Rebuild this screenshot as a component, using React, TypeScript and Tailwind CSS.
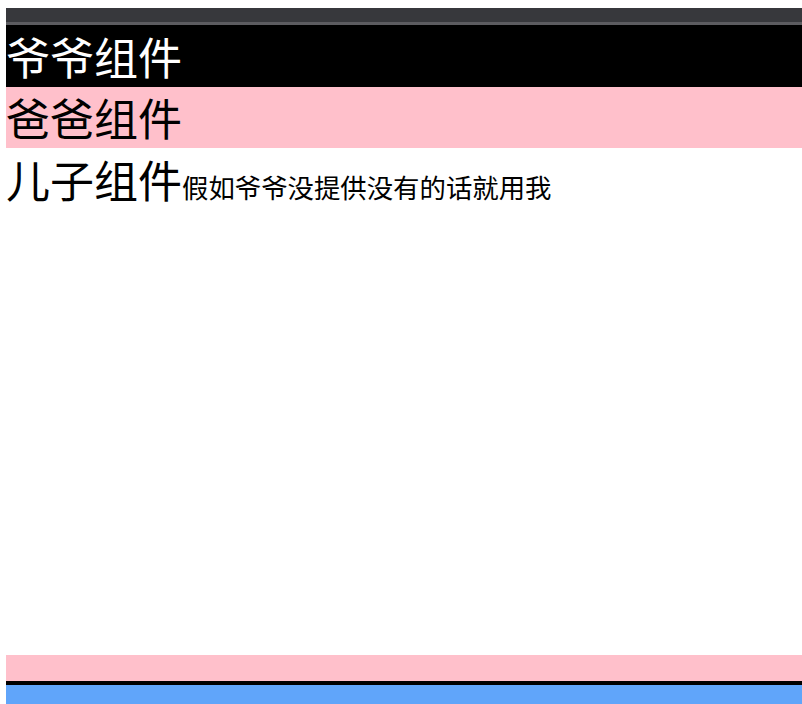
const font = { fontFamily: '"Noto Sans CJK SC", "Noto Sans", sans-serif' };

const App = () => {
  return (
    <div
      className="h-[704px] w-[802px] overflow-hidden bg-white pl-[6px] flex flex-col"
      style={font}
    >
      {/* top strip */}
      <div className="h-2 shrink-0"></div>
      <div className="h-[14px] shrink-0 bg-[#37383c]"></div>
      <div className="h-[3px] shrink-0 bg-[#5c5c60]"></div>

      {/* grandpa */}
      <div className="h-[62px] shrink-0 bg-black text-white text-[44px] leading-[62px]">
        爷爷组件
      </div>

      {/* father */}
      <div className="h-[61px] shrink-0 bg-[#ffc0cb] text-black text-[44px] leading-[61px]">
        爸爸组件
      </div>

      {/* son */}
      <div className="flex items-baseline text-black leading-[62px]">
        <span className="text-[44px]">儿子组件</span>
        <span className="text-[26.4px]">假如爷爷没提供没有的话就用我</span>
      </div>

      <div className="flex-1"></div>

      {/* footer */}
      <div className="h-[26px] shrink-0 bg-[#ffc0cb]"></div>
      <div className="h-[4px] shrink-0 bg-black"></div>
      <div className="h-[19px] shrink-0 bg-[#60a5fa]"></div>
    </div>
  );
};

export default App;
